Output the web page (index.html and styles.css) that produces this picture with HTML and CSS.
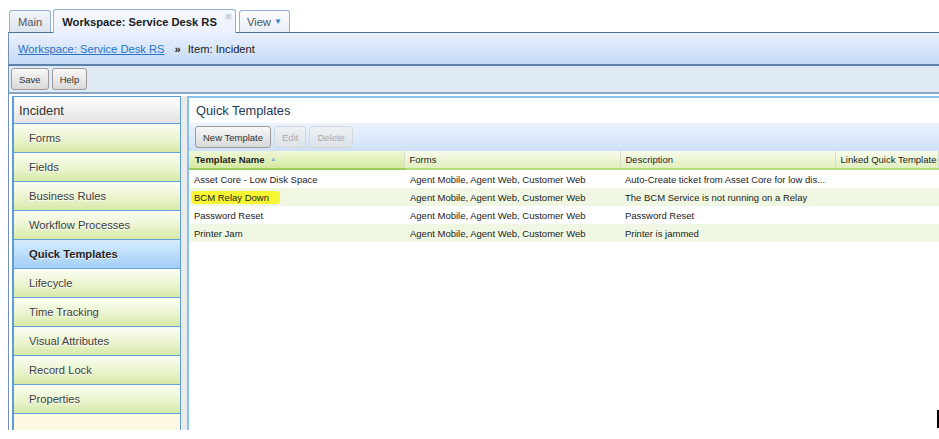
FILE: index.html
```html
<!DOCTYPE html>
<html lang="en">
<head>
<meta charset="utf-8">
<title>Workspace: Service Desk RS</title>
<link rel="stylesheet" href="styles.css">
</head>
<body>
<div class="app">
  <div class="tabbar">
    <div class="tab">Main</div>
    <div class="tab active">Workspace: Service Desk RS
      <svg class="close" width="7" height="7" viewBox="0 0 7 7"><rect x="0" y="0" width="7" height="7" rx="1" fill="#e3e8ee"/><path d="M1.8 1.8 L5.2 5.2 M5.2 1.8 L1.8 5.2" stroke="#9aa6b4" stroke-width="1"/></svg>
    </div>
    <div class="tab view">View <span class="caret">&#9660;</span></div>
  </div>
  <div class="frame">
    <div class="crumbs"><a href="#">Workspace: Service Desk RS</a><span class="sep">&raquo;</span><span>Item: Incident</span></div>
    <div class="toolbar">
      <button class="btn">Save</button>
      <button class="btn">Help</button>
    </div>
    <div class="main">
      <div class="nav">
        <div class="nav-head">Incident</div>
        <div class="nav-item">Forms</div>
        <div class="nav-item">Fields</div>
        <div class="nav-item">Business Rules</div>
        <div class="nav-item">Workflow Processes</div>
        <div class="nav-item sel">Quick Templates</div>
        <div class="nav-item">Lifecycle</div>
        <div class="nav-item">Time Tracking</div>
        <div class="nav-item">Visual Attributes</div>
        <div class="nav-item">Record Lock</div>
        <div class="nav-item">Properties</div>
      </div>
      <div class="gutter"></div>
      <div class="content">
        <div class="title">Quick Templates</div>
        <div class="gtool">
          <button class="btn">New Template</button>
          <button class="btn dis">Edit</button>
          <button class="btn dis">Delete</button>
        </div>
        <table class="grid">
          <colgroup><col class="c1"><col class="c2"><col class="c3"><col></colgroup>
          <thead>
            <tr><th class="sorted">Template Name <span class="arrow">&#9650;</span></th><th>Forms</th><th>Description</th><th>Linked Quick Template</th></tr>
          </thead>
          <tbody>
            <tr><td>Asset Core - Low Disk Space</td><td>Agent Mobile, Agent Web, Customer Web</td><td>Auto-Create ticket from Asset Core for low dis...</td><td></td></tr>
            <tr class="alt"><td><span class="mark">BCM Relay Down</span></td><td>Agent Mobile, Agent Web, Customer Web</td><td>The BCM Service is not running on a Relay</td><td></td></tr>
            <tr><td>Password Reset</td><td>Agent Mobile, Agent Web, Customer Web</td><td>Password Reset</td><td></td></tr>
            <tr class="alt"><td>Printer Jam</td><td>Agent Mobile, Agent Web, Customer Web</td><td>Printer is jammed</td><td></td></tr>
          </tbody>
        </table>
      </div>
    </div>
  </div>
  <div class="cursor"></div>
</div>
</body>
</html>
```
FILE: styles.css
```css
html, body {
  margin: 0;
  background: #fff;
  overflow: hidden;
}
body {
  font-family: "Liberation Sans", Arial, sans-serif;
  color: #222;
}
.app {
  position: relative;
  height: 430px;
  overflow: hidden;
}

/* Tabs */
.tabbar {
  display: flex;
  align-items: flex-end;
  gap: 2px;
  height: 32px;
  padding-left: 9px;
  box-sizing: border-box;
}
.tab {
  height: 22px;
  box-sizing: border-box;
  display: flex;
  align-items: center;
  padding: 0 8px;
  border: 1px solid #93b2d0;
  border-bottom: none;
  border-radius: 3px 3px 0 0;
  background: linear-gradient(#f2f5f9, #dbe4ee);
  font-size: 11.2px;
  color: #555;
}
.tab.active {
  position: relative;
  z-index: 1;
  height: 24px;
  margin-bottom: -1px;
  padding: 0 18px 0 8px;
  background: linear-gradient(#f6f8fc, #eaf0fd);
  color: #1c1c1c;
  font-weight: bold;
}
.tab .close {
  position: absolute;
  right: 3px;
  top: 3px;
}
.tab.view {
  margin-left: 1px;
  padding: 0 7px;
  background: linear-gradient(#fafcfe, #e9eff6);
  gap: 3px;
}
.caret {
  color: #3a7fc8;
  font-size: 8px;
}

/* Frame */
.frame {
  margin-left: 8px;
  border-left: 1px solid #7390ad;
  border-top: 1px solid #4d7399;
}
.crumbs {
  height: 33px;
  box-sizing: border-box;
  display: flex;
  align-items: center;
  padding-left: 9px;
  background: linear-gradient(#eaf0fd, #c5dbf9);
  border-bottom: 2px solid #5a83ab;
  font-size: 11.2px;
  color: #222;
}
.crumbs a {
  color: #2874c8;
  text-decoration: underline;
}
.sep {
  margin: 0 7px 0 10px;
  font-weight: bold;
}
.toolbar {
  height: 28px;
  box-sizing: border-box;
  display: flex;
  align-items: center;
  gap: 3px;
  padding-left: 2px;
  background: #dfeaf5;
  border-bottom: 2px solid #8aa5c0;
}
.btn {
  height: 22px;
  box-sizing: border-box;
  padding: 0 7px;
  border: 1px solid #9b9b9b;
  border-radius: 3px;
  background: linear-gradient(#f8f8f8, #d9d9d9);
  font-family: "Liberation Sans", Arial, sans-serif;
  font-size: 9.5px;
  color: #333;
}
.btn.dis {
  border-color: #d2d8df;
  background: linear-gradient(#eef1f5, #dde3ea);
  color: #a9acb0;
}

/* Main */
.main {
  display: flex;
  padding: 2px 0 0 3px;
  height: 400px;
}
.nav {
  width: 169px;
  flex: none;
  box-sizing: border-box;
  display: flex;
  flex-direction: column;
  border: 1px solid #5c9dd6;
  border-left-width: 2px;
  border-bottom: none;
  background: #fdf9e2;
}
.nav-head {
  height: 27px;
  box-sizing: border-box;
  display: flex;
  align-items: center;
  padding-left: 5px;
  background: linear-gradient(#fdfdfd, #e4e4e4);
  border-bottom: 1px solid #5c9dd6;
  font-size: 12.8px;
  color: #333;
}
.nav-item {
  height: 29px;
  box-sizing: border-box;
  display: flex;
  align-items: center;
  padding-left: 15px;
  background: linear-gradient(#fbfdf3 0%, #eaf4cf 55%, #d7e9a8 100%);
  border-bottom: 1px solid #62a3da;
  font-size: 11.2px;
  color: #3d3d3d;
  text-shadow: 0 1px 0 #fff;
}
.nav-item.sel {
  background: linear-gradient(#d6ecfd, #a2cff7);
  font-weight: bold;
  color: #222;
}
.gutter {
  width: 6px;
  flex: none;
  background: #ebebeb;
}
.content {
  flex: 1;
  min-width: 0;
  border-top: 2px solid #88c1ea;
  border-left: 2px solid #88c1ea;
  background: #fff;
}
.title {
  height: 25px;
  display: flex;
  align-items: center;
  padding-left: 7px;
  font-size: 12.8px;
  color: #22395a;
}
.gtool {
  height: 28px;
  display: flex;
  align-items: center;
  gap: 3px;
  padding-left: 6px;
  background: linear-gradient(#ecf3fd, #cfe1f8);
}

/* Grid */
.grid {
  width: 100%;
  table-layout: fixed;
  border-collapse: collapse;
  font-size: 9.5px;
  color: #222;
}
.grid .c1 { width: 215px; }
.grid .c2 { width: 216px; }
.grid .c3 { width: 215px; }
.grid th {
  height: 18px;
  box-sizing: border-box;
  padding: 0 0 0 5px;
  text-align: left;
  font-weight: normal;
  white-space: nowrap;
  overflow: hidden;
  background: linear-gradient(#f8fbec, #e0efbe);
  border-right: 1px solid #d5ddca;
  border-bottom: 2px solid #b4dc7c;
}
.grid th.sorted {
  padding-left: 6px;
  font-weight: bold;
  background: linear-gradient(#f1f8d8, #d3e9a0);
  border-bottom-color: #9ccd58;
}
.arrow {
  margin-left: 3px;
  font-size: 6px;
  color: #7fb0e0;
  vertical-align: 2px;
}
.grid td {
  height: 18px;
  padding: 0 0 0 5px;
  white-space: nowrap;
  overflow: hidden;
}
.grid td + td {
  padding-left: 6px;
}
.grid td + td + td {
  padding-left: 5px;
}
.grid tr.alt td {
  background: #eff7e2;
}
.mark {
  margin-left: -3px;
  padding: 1px 11px 1px 3px;
  border-radius: 4px;
  background: #f6f632;
}

/* stray cursor mark at the bottom right */
.cursor {
  position: absolute;
  left: 937px;
  top: 410px;
  width: 2px;
  height: 18px;
  background: #000;
}
```
